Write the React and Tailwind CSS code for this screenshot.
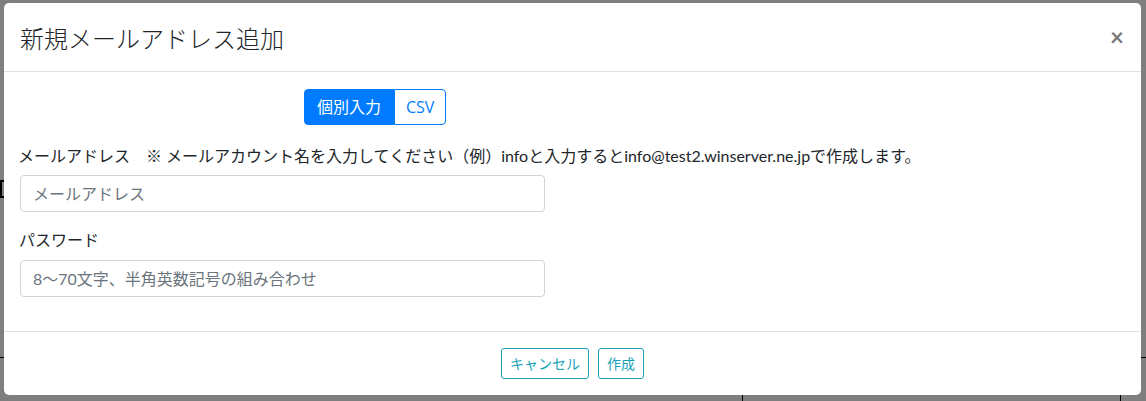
import React from "react";

const FONT = "font-['Lato','Noto_Sans_CJK_JP',sans-serif]";

function Backdrop() {
  // ページ本体（モーダルの裏側）
  return (
    <div className="absolute inset-0 bg-white">
      <h1 className="mt-[2px] text-center text-[22px] font-bold leading-[28px] text-[#222]">
        Winserver Share Control Panel
      </h1>
      <div className="mt-[150px] h-[18px] w-[6px] border-2 border-black" />
      <div className="absolute bottom-0 left-0 right-0 h-[44px] border-t border-black">
        <div className="flex h-full">
          <div className="w-[743px] border-r border-black" />
          <div className="w-[378px] border-r border-black" />
        </div>
      </div>
    </div>
  );
}

function Modal() {
  return (
    <div className="absolute left-[4px] top-[3px] flex h-[392px] w-[1137px] flex-col rounded-[5px] bg-white">
      {/* ヘッダー */}
      <div className="flex h-[69px] items-start justify-between border-b border-[#dee2e6] px-4 pt-[18px]">
        <h5 className="text-[24px] font-light leading-[36px] text-[#212529]">新規メールアドレス追加</h5>
        <button className="mr-[1px] mt-[1px] text-[24px] font-bold leading-[30px] text-[#7a7a7a]">×</button>
      </div>

      {/* 本文 */}
      <div className="flex-1 px-4 pt-[17px]">
        <div className="ml-[284px] flex h-[36px] w-fit">
          <button className="rounded-l-[4px] border border-[#007bff] bg-[#007bff] px-3 text-[16px] text-white">
            個別入力
          </button>
          <button className="rounded-r-[4px] border border-[#007bff] bg-white px-[11px] text-[16px] font-['Open_Sans',sans-serif] text-[#007bff]">
            CSV
          </button>
        </div>

        <p className="ml-[-2px] mt-[19px] text-[16px] leading-[24px] text-[#212529]">
          メールアドレス　※ メールアカウント名を入力してください（例）infoと入力するとinfo@test2.winserver.ne.jpで作成します。
        </p>
        <input
          type="text"
          placeholder="メールアドレス"
          className="mt-[7px] h-[37px] w-[525px] rounded-[4px] border border-[#ced4da] px-3 text-[16px] placeholder:text-[#6c757d] focus:outline-none"
        />

        <p className="ml-[-1px] mt-[16px] text-[16px] leading-[24px] text-[#212529]">パスワード</p>
        <input
          type="password"
          placeholder="8～70文字、半角英数記号の組み合わせ"
          className="mt-[8px] h-[37px] w-[525px] rounded-[4px] border border-[#ced4da] px-3 text-[16px] placeholder:text-[#6c757d] focus:outline-none"
        />
      </div>

      {/* フッター */}
      <div className="flex h-[64px] items-center justify-center gap-[9px] border-t border-[#dee2e6]">
        <button className="h-[31px] rounded-[3px] border border-[#17a2b8] px-2 text-[14px] text-[#17a2b8]">
          キャンセル
        </button>
        <button className="h-[31px] rounded-[3px] border border-[#17a2b8] px-2 text-[14px] text-[#17a2b8]">
          作成
        </button>
      </div>
    </div>
  );
}

export default function App() {
  return (
    <div className={`relative h-[401px] w-[1146px] overflow-hidden ${FONT}`}>
      <Backdrop />
      <div className="absolute inset-0 bg-black/50" />
      <Modal />
    </div>
  );
}
